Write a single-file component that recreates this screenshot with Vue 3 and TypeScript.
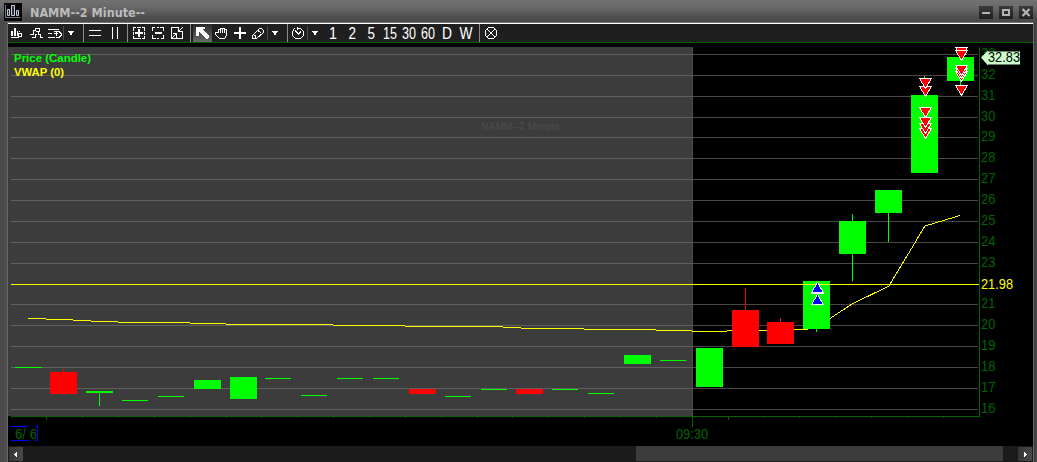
<script setup lang="ts">
interface Tool { w: number; kind?: 'sep' | 'dim' | 'active' | 'text'; d?: string; fill?: string; label?: string; tx?: number; tl?: number }
interface Cell extends Tool { x: number }
interface Candle { x: number; top: number; h: number; up: boolean; w?: number; wick?: [number, number, number] }

const caret = (x: number) => `M${x} 31h6v1h-1v1h-1v2h-2v-2h-1v-1h-1z`
const tools: Tool[] = [
  { w: 18, fill: 'M11 31h2v5h-2zM14 28h2v8h-2zM17 31h1v5h-1z', d: 'M11 37.500h8M18.500 33v4M19 33.500h2.500v3h-3M19 31.500h1' },
  { w: 20, d: 'M30 34.500h3v-4h2.500v-2h4v3h-1v3h2v3h2M32 37.500h3v-3h2M36 31.500h2' },
  { w: 17, d: 'M48 29.500h11M48 33.500h4M48 37.500h7M54 31.500h5l2 2v2l-2 2h-3M53.500 33.500h4M56.500 31v5' },
  { w: 1, kind: 'dim' },
  { w: 19, fill: caret(68) },
  { w: 1, kind: 'sep' },
  { w: 21, d: 'M89 30.500h12M89 35.500h12' },
  { w: 22, d: 'M112.500 27v12M117.500 27v12' },
  { w: 1, kind: 'sep' },
  { w: 21, d: 'M136 27.500h-2.500v3M133.500 32v3M133.500 36v2.500h3M142 27.500h2.500v3M144.500 32v3M144.500 36v2.500h-3M137 27.500h4M137 38.500h4', fill: 'M138 29h2v3h3v2h-3v3h-2v-3h-3v-2h3z' },
  { w: 19, d: 'M155 27.500h-2.500v3M152.500 35v3.500h3M160 27.500h3.500v3M163.500 35v3.500h-3M157 27.500h2M157 38.500h2', fill: 'M155 32h7v2h-7z' },
  { w: 22, d: 'M179 27.500h-7.500v11h11v-7M172 38l5-5M178 32l5-5M173 33.500h3.500v4M178.500 28v3.500h4' },
  { w: 1, kind: 'sep' },
  { w: 2 },
  { w: 19, kind: 'active', fill: 'M196 27h9v2h-3l7 7v1l-2 2h-1l-7-7v4h-3z' },
  { w: 20, d: 'M218.500 33v-4h2v4M220.500 33v-5h2v5M222.500 28.500h2v4.500M224.500 29.500h2v6l-2 3h-5l-4-4v-2h2l1 1' },
  { w: 18, fill: 'M239 27h2v5h5v2h-5v5h-2v-5h-5v-2h5z' },
  { w: 17, d: 'M252.500 38.500v-3l7-7h2l2 2v2l-7 6zM254 35.500h1.500v2M258 30.500l3.500 3' },
  { w: 1, kind: 'dim' },
  { w: 19, fill: caret(272) },
  { w: 1, kind: 'sep' },
  { w: 19, d: 'M294.500 28.500l-2 3v4l3 3h5l3-3v-4l-3-3h-3M295 30.500l3 3M298 34.500l3-3M297.500 27v3' },
  { w: 1, kind: 'dim' },
  { w: 16, fill: caret(312) },
  { w: 19, kind: 'text', label: '1', tx: 329, tl: 8 },
  { w: 19, kind: 'text', label: '2', tx: 348.500, tl: 7.5 },
  { w: 19, kind: 'text', label: '5', tx: 367.500, tl: 7.5 },
  { w: 19, kind: 'text', label: '15', tx: 383, tl: 14 },
  { w: 19, kind: 'text', label: '30', tx: 402, tl: 14 },
  { w: 19, kind: 'text', label: '60', tx: 421, tl: 14 },
  { w: 19, kind: 'text', label: 'D', tx: 442, tl: 10 },
  { w: 22, kind: 'text', label: 'W', tx: 459.500, tl: 13 },
  { w: 1, kind: 'sep' },
  { w: 22, d: 'M488.500 27.500h5l3 3v5l-3 3h-5l-3-3v-5zM487 29l8 8M495 29l-8 8' },
]
let cursor = 8
// each cell's viewBox starts where the previous cell ends
const cells: Cell[] = tools.map((t) => {
  const x = cursor
  cursor += t.w
  return { ...t, x }
})

const grid = [54, 75, 96, 117, 137, 158, 179, 200, 221, 242, 263, 304, 325, 346, 367, 388, 409]
const labels = [54, 75, 96, 117, 137, 158, 179, 200, 221, 242, 263, 284, 304, 325, 346, 367, 388, 409]
  .map((y, i) => ({ y: y + 4, n: 33 - i })).filter(l => l.n !== 22)
const minor = [11, 82, 118, 154, 190, 226, 261, 297, 333, 369, 405, 441, 477, 512, 548, 584, 620, 656, 763, 799, 835, 871, 907, 943]

const candles: Candle[] = [
  { x: 15, top: 367, h: 1, up: true },
  { x: 50, top: 372, h: 22, up: false, wick: [63, 369, 372] },
  { x: 86, top: 391, h: 2, up: true, wick: [99, 391, 406] },
  { x: 122, top: 400, h: 1, up: true, w: 26 },
  { x: 158, top: 396, h: 1, up: true, w: 26 },
  { x: 194, top: 380, h: 9, up: true },
  { x: 230, top: 377, h: 22, up: true },
  { x: 265, top: 378, h: 1, up: true, w: 26 },
  { x: 301, top: 395, h: 1, up: true, w: 26 },
  { x: 337, top: 378, h: 1, up: true, w: 26 },
  { x: 373, top: 378, h: 1, up: true, w: 26 },
  { x: 409, top: 389, h: 5, up: false },
  { x: 445, top: 396, h: 1, up: true, w: 26 },
  { x: 481, top: 389, h: 1, up: true, w: 26 },
  { x: 516, top: 389, h: 5, up: false },
  { x: 552, top: 389, h: 1, up: true, w: 26 },
  { x: 588, top: 393, h: 1, up: true, w: 26 },
  { x: 624, top: 355, h: 9, up: true },
  { x: 660, top: 360, h: 1, up: true, w: 26 },
  { x: 696, top: 348, h: 39, up: true },
  { x: 732, top: 310, h: 37, up: false, wick: [745, 288, 347] },
  { x: 767, top: 322, h: 22, up: false, wick: [780, 318, 344] },
  { x: 803, top: 281, h: 48, up: true, wick: [816, 281, 332] },
  { x: 839, top: 221, h: 33, up: true, wick: [852, 214, 281] },
  { x: 875, top: 190, h: 23, up: true, wick: [888, 190, 242] },
  { x: 911, top: 95, h: 78, up: true, wick: [924, 76, 173] },
  { x: 947, top: 57, h: 24, up: true, wick: [960, 47, 88] },
]
const vwapSteps = 'M28 318.500h18M46 319.500h27M73 320.500h18M91 321.500h27M118 322.500h72M190 323.500h36M226 324.500h107M333 325.500h72M405 326.500h98M503 327.500h18M521 328.500h63M584 329.500h72M656 330.500h36M692 331.500h35M727 330.500h67M794 329.500h13'

const sells: [number, number][] = [
  [925, 128], [925, 123], [925, 117], [925, 107], [925, 86], [925, 78],
  [961, 85], [961, 71], [961, 68], [961, 65], [961, 47], [961, 50],
]
const buys = [294, 283, 282]
const down = (x: number, y: number) => `M${x - 5.5} ${y + 0.5}h12l-6 10z`
const up = (y: number) => `M817.500 ${y + 0.5}l6 10h-12z`
</script>

<template>
  <div class="window">
    <header class="title">
      <svg class="logo" width="18" height="18" viewBox="0 0 18 18">
        <rect width="18" height="18" fill="#05060a" />
        <path d="M1.500 2v12.500h15" fill="none" stroke="#777b88" />
        <path d="M3.500 12.500V6.500h2v6zM7.500 12.500V2.500h3v10zM12.500 12.500V7.500h2v5z" fill="#30333c" stroke="#c4c8d4" stroke-linejoin="round" />
      </svg>
      <svg class="caption" width="130" height="22" viewBox="0 0 130 22">
        <text x="0" y="17" textLength="115" lengthAdjust="spacingAndGlyphs">NAMM--2 Minute--</text>
      </svg>
      <div class="controls">
        <svg width="14" height="13" viewBox="0 0 14 13"><path d="M3 6h8v2H3z" fill="#b4b4b4" /></svg>
        <svg width="14" height="13" viewBox="0 0 14 13"><path d="M4 4h6v5H4z" fill="none" stroke="#b4b4b4" stroke-width="2" /></svg>
        <svg width="14" height="13" viewBox="0 0 14 13"><path d="M3.500 3l7 7M10.500 3l-7 7" stroke="#b4b4b4" stroke-width="2.200" /></svg>
      </div>
    </header>
    <div class="body">
      <nav class="toolbar">
        <svg
          v-for="(c, i) in cells" :key="i" :class="['tool', c.kind]"
          :width="c.w" height="18" :viewBox="`${c.x} 24 ${c.w} 18`"
        >
          <path v-if="c.d" :d="c.d" class="stroke" />
          <path v-if="c.fill" :d="c.fill" class="solid" />
          <text v-if="c.label" :x="c.tx" y="39" :textLength="c.tl" lengthAdjust="spacingAndGlyphs">{{ c.label }}</text>
        </svg>
      </nav>
      <svg class="chart" width="1025" height="404" viewBox="8 42 1025 404">
        <rect x="8" y="42" width="1025" height="404" fill="#000" />
        <rect x="8" y="42" width="1025" height="1" fill="#006400" />
        <rect x="8" y="47" width="684" height="369" fill="#3c3c3c" />
        <rect x="692" y="47" width="1" height="369" fill="#534c4d" />
        <g class="crisp">
          <template v-for="y in grid" :key="y">
            <rect x="11" :y="y" width="681" height="1" fill="#625f60" />
            <rect x="692" :y="y" width="286" height="1" fill="#4b4546" />
          </template>
        </g>
        <text class="bold mark" x="481" y="130" textLength="79" lengthAdjust="spacingAndGlyphs">NAMM--2 Minute</text>
        <g class="crisp">
          <path :d="vwapSteps" class="vwap" />
          <path d="M807 329.500L830 318.500L852 304L889 286L925 226L960 215.500" class="vwap" />
          <g v-for="c in candles" :key="c.x" :fill="c.up ? '#00ff00' : '#ff0000'">
            <rect :x="c.x" :y="c.top" :width="c.w ?? 27" :height="c.h" />
            <rect v-if="c.wick" :x="c.wick[0]" :y="c.wick[1]" width="1" :height="c.wick[2] - c.wick[1]" />
          </g>
          <rect x="11" y="284" width="968" height="1" fill="#ffff00" />
          <rect x="11" y="416" width="969" height="1" fill="#006400" />
          <rect x="979" y="47" width="1" height="370" fill="#006400" />
          <rect v-for="x in minor" :key="x" :x="x" y="417" width="1" height="1" fill="#006400" />
          <path d="M46 417h1v3h-1zM728 417h1v3h-1zM692 417h1v10h-1z" fill="#006400" />
          <path v-for="y in buys" :key="'b' + y" :d="up(y)" fill="#0000ff" stroke="#fff" />
          <path v-for="[x, y] in sells" :key="x + '-' + y" :d="down(x, y)" fill="#ff0000" stroke="#fff" />
        </g>
        <text class="bold" x="14" y="62" textLength="77" lengthAdjust="spacingAndGlyphs" fill="#00ff00">Price (Candle)</text>
        <text class="bold" x="14" y="76" textLength="50" lengthAdjust="spacingAndGlyphs" fill="#ffff00">VWAP (0)</text>
        <text v-for="l in labels" :key="l.n" class="num" x="981" :y="l.y" textLength="14.300" lengthAdjust="spacingAndGlyphs">{{ l.n }}</text>
        <text class="num" x="981" y="289" textLength="32" lengthAdjust="spacingAndGlyphs" fill="#ffff00">21.98</text>
        <rect x="980" y="42" width="20" height="5" fill="#000" />
        <rect x="980" y="42" width="20" height="1" fill="#006400" />
        <path d="M981 57.500l7-7v1h32v13h-32v1z" fill="#ccffcc" />
        <text class="num tag" x="988" y="62" textLength="32" lengthAdjust="spacingAndGlyphs">32.83</text>
        <path d="M11 426.500h17M11 440.500h18M35 426.500h2.500v14h-2.500" fill="none" stroke="#0000ff" class="crisp" />
        <text class="num" x="15" y="439" textLength="22" lengthAdjust="spacingAndGlyphs">6/ 6</text>
        <text class="num" x="676" y="439" textLength="32" lengthAdjust="spacingAndGlyphs">09:30</text>
      </svg>
      <div class="scroll">
        <span class="step"><svg width="14" height="14"><path d="M8 5v5h-1v-1h-1v-1h-1v-1h1v-1h1v-1z" fill="#fff" /></svg></span>
        <span class="thumb"></span>
        <span class="step"><svg width="14" height="14"><path d="M6 5v5h1v-1h1v-1h1v-1h-1v-1h-1v-1z" fill="#fff" /></svg></span>
      </div>
    </div>
  </div>
</template>

<style scoped>
.window { width: 1037px; height: 462px; overflow: hidden; background: linear-gradient(90deg, #474747, #4e4e4e 7px, #3c3c3c 1034px, #4a4a4a); display: flex; flex-direction: column; }
svg { display: block; flex: none; }
.title { height: 22px; box-sizing: border-box; display: flex; padding: 0 4px; background: linear-gradient(#727272, #686868 35%, #4d4d4d 80%, #484848); }
.logo { margin-top: 3px; }
.caption { margin-left: 8px; }
.caption text { font: bold 12.5px "DejaVu Sans", sans-serif; fill: #bcbcbc; }
.controls { margin-left: auto; display: flex; gap: 6px; padding-top: 6px; }
.controls svg { background: linear-gradient(#3a3a3a, #202020); }
.body { margin-left: 7px; width: 1025px; border-left: 1px solid #696969; border-right: 1px solid #696969; border-top: 1px solid #777; height: 440px; display: flex; flex-direction: column; }
.toolbar { height: 19px; box-sizing: border-box; border-top: 1px solid #fff; background: #1f1f1f; display: flex; }
.tool { shape-rendering: crispEdges; }
.sep { background: #8a8a8a; }
.dim { background: #4b4b4b; height: 14px; margin-top: 2px; }
.active { background: linear-gradient(#282828, #6a6a6a); }
.tool .stroke { fill: none; stroke: #fff; stroke-width: 1; }
.tool .solid { fill: #fff; }
.tool text { font: 16.5px "Liberation Sans", sans-serif; fill: #fff; }
.crisp { shape-rendering: crispEdges; }
.vwap { fill: none; stroke: #ffff00; stroke-width: 1; }
.bold { font: bold 11px "Liberation Sans", sans-serif; }
.mark { fill: #484848; }
.num { font: 14px "Liberation Sans", sans-serif; }
.num:not([fill]) { fill: #006400; }
.num.tag { fill: #000; }
.scroll { height: 16px; background: #1b1b1b; display: flex; align-items: flex-start; padding: 1px 0 0 1px; box-sizing: border-box; }
.step { width: 14px; height: 14px; background: linear-gradient(90deg, #363636, #484848); }
.thumb { width: 367px; height: 15px; margin: -1px 15px 0 613px; background: #3c3c3c; }
</style>
